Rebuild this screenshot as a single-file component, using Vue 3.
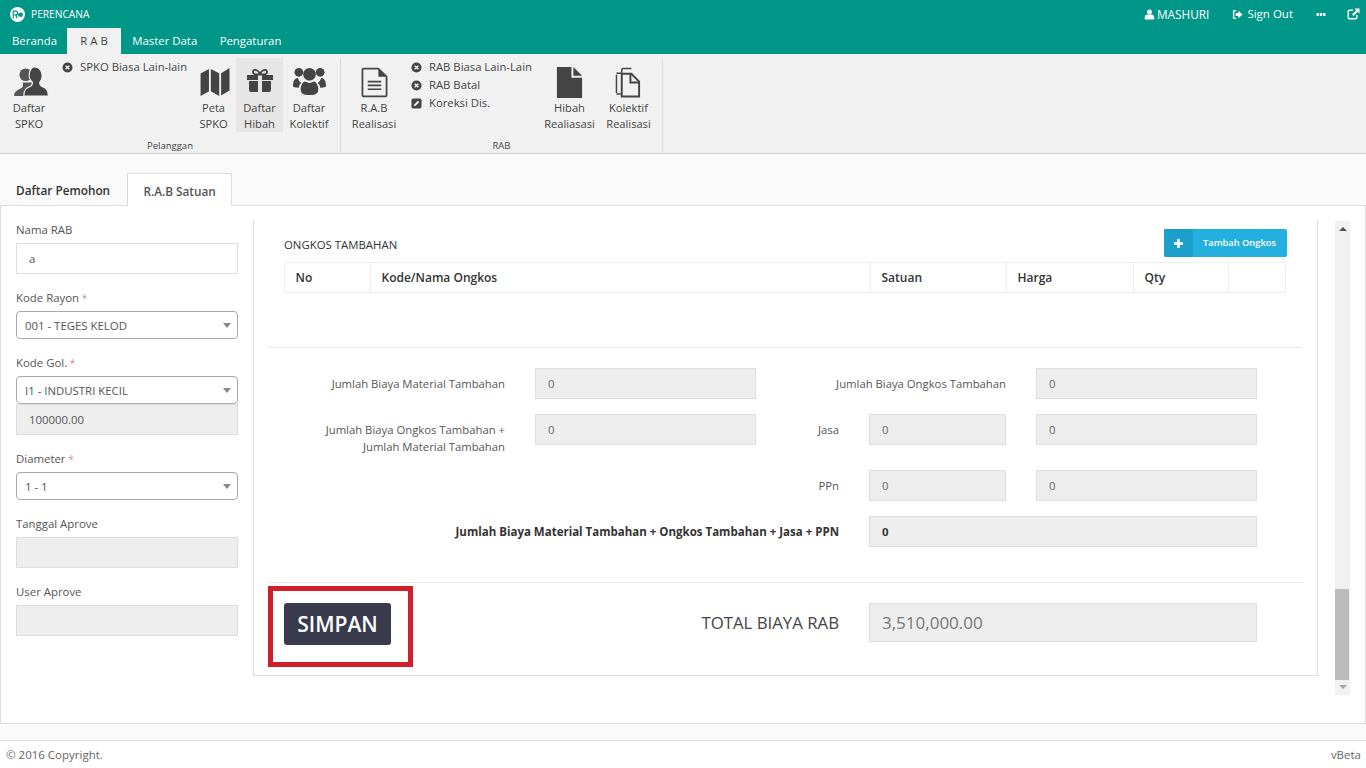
<template>
  <div class="app">
    <header class="topbar">
      <div class="brand">
        <svg class="logo" viewBox="0 0 16 16" aria-hidden="true">
          <circle cx="8" cy="8" r="8" fill="#fff" />
          <path d="M3.500 12V4.500h2.400a2 2 0 0 1 .3 4L7.500 12M4.700 8.400h1" fill="none" stroke="#009688" stroke-width="1.300" />
          <rect x="8.800" y="6" width="4.800" height="4.400" rx="1" fill="#009688" />
        </svg>
        <span>PERENCANA</span>
      </div>
      <div class="top-actions">
        <span class="top-link user">
          <svg viewBox="0 0 12 12" aria-hidden="true"><circle cx="6" cy="3.200" r="2.700" fill="#fff" /><path d="M.8 11.500V9.200C.8 7.400 2.200 6 3.600 6h4.800c1.400 0 2.800 1.400 2.800 3.200v2.300z" fill="#fff" /></svg>
          MASHURI
        </span>
        <span class="top-link signout">
          <svg viewBox="0 0 12 12" aria-hidden="true"><path d="M4.500 1H2.500A1.500 1.500 0 0 0 1 2.500v7A1.500 1.500 0 0 0 2.500 11h2V9.500h-2v-7h2z" fill="#fff" /><path d="M7 2l4.500 4L7 10V7.700H4V4.300h3z" fill="#fff" /></svg>
          Sign Out
        </span>
        <svg class="dots" viewBox="0 0 9 3" aria-hidden="true"><path d="M0 0h2.400v3H0zM3.300 0h2.400v3H3.300zM6.600 0H9v3H6.600z" fill="#fff" /></svg>
        <svg class="popout" viewBox="0 0 13 12" aria-hidden="true"><path d="M6 2.200H2.500a1.300 1.300 0 0 0-1.300 1.300v6a1.300 1.300 0 0 0 1.300 1.300h6a1.300 1.300 0 0 0 1.300-1.300V7" fill="none" stroke="#fff" stroke-width="1.400" /><path d="M7.500.5H12.500v5L10.700 3.800 6.500 8 5 6.500l4.200-4.200z" fill="#fff" /></svg>
      </div>
    </header>

    <nav class="menu">
      <a v-for="item in menu" :key="item" class="menu-item" :class="{ active: item === 'R A B' }">{{ item }}</a>
    </nav>

    <section class="ribbon">
      <div class="group group-one">
        <div class="group-items">
          <div class="rb rb-spko">
            <svg viewBox="0 0 36 32" aria-hidden="true">
              <circle cx="12" cy="9" r="6.500" fill="#555" />
              <path d="M0 31c0-5 4-6 7-8 3-1 2-4 2-6h10l5 14z" fill="#555" />
              <path d="M21 1c4.500 0 8 3.500 8 9 0 3-1 5.500-2.500 7 0 2 .5 3.500 3 4.500 3 1.200 6 2.500 6 9.500H10c0-7 3-8.300 6-9.500 2.500-1 3-2.500 3-4.500-1.500-1.500-3.500-4-3.500-7 0-5 2.500-9 5.500-9z" fill="#444" stroke="#f1f1f1" stroke-width="1.200" />
            </svg>
            <span>Daftar<br />SPKO</span>
          </div>
          <ul class="rb-list list-one">
            <li>
              <svg viewBox="0 0 12 12" aria-hidden="true"><circle cx="6" cy="6" r="5.500" fill="#444" /><path d="M4 4l4 4M8 4l-4 4" stroke="#f1f1f1" stroke-width="1.600" /></svg>
              SPKO Biasa Lain-lain
            </li>
          </ul>
          <div class="rb rb-peta">
            <svg viewBox="0 0 32 30" aria-hidden="true"><path d="M0 6l9-5v24l-9 5zM11 1l9 4.500V30l-9-5zM22 5.500L31 0v24l-9 5.500z" fill="#444" /></svg>
            <span>Peta<br />SPKO</span>
          </div>
          <div class="rb rb-hibah is-active">
            <svg viewBox="0 0 26 23" aria-hidden="true">
              <path d="M8 5.500C4.500 3.500 6 .2 9 1c2 .6 3.500 2.500 4 4.500 .5-2 2-3.900 4-4.500 3-.8 4.500 2.500 1 4.500z" fill="none" stroke="#444" stroke-width="1.800" />
              <path d="M0 6h11v5H0zM15 6h11v5H15zM2 12h9v11H4a2 2 0 0 1-2-2zM15 12h9v9a2 2 0 0 1-2 2h-7z" fill="#444" />
            </svg>
            <span>Daftar<br />Hibah</span>
          </div>
          <div class="rb rb-kolektif">
            <svg viewBox="0 0 34 30" aria-hidden="true">
              <circle cx="6" cy="6" r="4.500" fill="#444" /><circle cx="28" cy="6" r="4.500" fill="#444" /><circle cx="17" cy="8" r="6.500" fill="#444" />
              <path d="M0 20c0-5 2-8 5-8 1 3 2 4 3.500 5C7 18 6 20 6 22 2 22 0 21.500 0 20zM34 20c0-5-2-8-5-8-1 3-2 4-3.500 5 1.500 1 2.500 3 2.500 5 4 0 6-.5 6-2z" fill="#444" />
              <path d="M8 24c0-5 2-8 4.500-8.500 1.500 1 3 1.500 4.500 1.500s3-.5 4.500-1.500C24 16 26 19 26 24c0 4-3 5.500-9 5.500S8 28 8 24z" fill="#444" />
            </svg>
            <span>Daftar<br />Kolektif</span>
          </div>
        </div>
        <div class="group-label">Pelanggan</div>
      </div>

      <div class="group group-two">
        <div class="group-items">
          <div class="rb rb-rab">
            <svg viewBox="0 0 28 32" aria-hidden="true">
              <path d="M1.500 3A1.500 1.500 0 0 1 3 1.500h15l8.500 8.500v19a1.500 1.500 0 0 1-1.500 1.500H3A1.500 1.500 0 0 1 1.500 29z" fill="none" stroke="#444" stroke-width="1.800" />
              <path d="M18 2v8h8z" fill="#444" />
              <path d="M7 15h14M7 19h14M7 23h14" stroke="#444" stroke-width="1.800" />
            </svg>
            <span>R.A.B<br />Realisasi</span>
          </div>
          <ul class="rb-list list-two">
            <li>
              <svg viewBox="0 0 12 12" aria-hidden="true"><circle cx="6" cy="6" r="5.500" fill="#444" /><path d="M4 4l4 4M8 4l-4 4" stroke="#f1f1f1" stroke-width="1.600" /></svg>
              RAB Biasa Lain-Lain
            </li>
            <li>
              <svg viewBox="0 0 12 12" aria-hidden="true"><circle cx="6" cy="6" r="5.500" fill="#444" /><path d="M4 4l4 4M8 4l-4 4" stroke="#f1f1f1" stroke-width="1.600" /></svg>
              RAB Batal
            </li>
            <li>
              <svg viewBox="0 0 12 12" aria-hidden="true"><rect x=".5" y=".5" width="11" height="11" rx="2" fill="#444" /><path d="M3 9l.5-2L7.500 3l1.500 1.500-4 4z" fill="#f1f1f1" /></svg>
              Koreksi Dis.
            </li>
          </ul>
          <div class="rb rb-real">
            <svg viewBox="0 0 26 32" aria-hidden="true"><path d="M0 0h15v11h11v21H0zM17 0l9 9h-9z" fill="#444" /></svg>
            <span>Hibah<br />Realiasasi</span>
          </div>
          <div class="rb rb-real">
            <svg viewBox="0 0 28 32" aria-hidden="true">
              <path d="M7 6V3a1.500 1.500 0 0 1 1.500-1.500H17M1.500 8v19" fill="none" stroke="#444" stroke-width="1.500" />
              <path d="M7 7h10l8 8v15.500H7z" fill="none" stroke="#444" stroke-width="2" />
              <path d="M16 7v9h9" fill="none" stroke="#444" stroke-width="2" />
              <path d="M1.500 6.500H7M1.500 28H6" stroke="#444" stroke-width="1.500" />
            </svg>
            <span>Kolektif<br />Realisasi</span>
          </div>
        </div>
        <div class="group-label">RAB</div>
      </div>
    </section>

    <section class="page">
      <div class="tabs">
        <span class="tab">Daftar Pemohon</span>
        <span class="tab active">R.A.B Satuan</span>
      </div>

      <div class="tab-body">
        <aside class="side">
          <div v-for="f in fields" :key="f.label" class="field">
            <label>{{ f.label }}<em v-if="f.required"> *</em></label>
            <div v-if="f.type === 'select'" class="select">
              <span>{{ f.value }}</span><i class="caret"></i>
            </div>
            <div v-else class="input" :class="{ off: f.off }">{{ f.value }}</div>
            <div v-if="f.extra" class="input off">{{ f.extra }}</div>
          </div>
        </aside>

        <div class="panel">
          <div class="ongkos">
            <div class="ongkos-head">
              <h3>ONGKOS TAMBAHAN</h3>
              <button type="button" class="add-btn">
                <span class="add-icon">
                  <svg viewBox="0 0 9 9" aria-hidden="true"><path d="M3.200 0h2.600v3.200H9v2.600H5.800V9H3.200V5.800H0V3.200h3.200z" fill="#fff" /></svg>
                </span>
                <span class="add-text">Tambah Ongkos</span>
              </button>
            </div>
            <table class="grid-table">
              <thead>
                <tr>
                  <th class="c-no">No</th>
                  <th class="c-kode">Kode/Nama Ongkos</th>
                  <th class="c-satuan">Satuan</th>
                  <th class="c-harga">Harga</th>
                  <th class="c-qty">Qty</th>
                  <th></th>
                </tr>
              </thead>
            </table>
          </div>

          <div class="totals">
            <div class="lbl">Jumlah Biaya Material Tambahan</div>
            <div class="box">0</div>
            <div class="lbl span-2">Jumlah Biaya Ongkos Tambahan</div>
            <div class="box">0</div>

            <div class="lbl two-line">Jumlah Biaya Ongkos Tambahan +<br />Jumlah Material Tambahan</div>
            <div class="box">0</div>
            <div class="lbl">Jasa</div>
            <div class="box">0</div>
            <div class="box">0</div>

            <div class="lbl from-3">PPn</div>
            <div class="box">0</div>
            <div class="box">0</div>

            <div class="lbl strong span-3">Jumlah Biaya Material Tambahan + Ongkos Tambahan + Jasa + PPN</div>
            <div class="box strong span-2">0</div>
          </div>

          <div class="save-row">
            <div class="save-cell">
              <button type="button" class="save-btn">SIMPAN</button>
              <div class="highlight"></div>
            </div>
            <div class="total-lbl">TOTAL BIAYA RAB</div>
            <div class="total-box">3,510,000.00</div>
          </div>
        </div>

        <div class="scrollbar">
          <i class="arrow up"></i>
          <div class="track"><div class="thumb"></div></div>
          <i class="arrow down"></i>
        </div>
      </div>
    </section>

    <div class="strip"></div>
    <footer class="footer">
      <span>© 2016 Copyright.</span>
      <span>vBeta</span>
    </footer>
  </div>
</template>

<script setup>
const menu = ['Beranda', 'R A B', 'Master Data', 'Pengaturan']

const fields = [
  { label: 'Nama RAB', value: 'a' },
  { label: 'Kode Rayon', value: '001 - TEGES KELOD', type: 'select', required: true },
  { label: 'Kode Gol.', value: 'I1 - INDUSTRI KECIL', type: 'select', required: true, extra: '100000.00' },
  { label: 'Diameter', value: '1 - 1', type: 'select', required: true },
  { label: 'Tanggal Aprove', value: '', off: true },
  { label: 'User Aprove', value: '', off: true },
]
</script>

<style>
html, body {
  margin: 0;
  overflow: hidden;
}
</style>

<style scoped>
* {
  box-sizing: border-box;
}

.app {
  display: flex;
  flex-direction: column;
  height: 768px;
  background: #fff;
  color: #444;
  font-family: "Open Sans", "Noto Sans", sans-serif;
  font-size: 11.400px;
  line-height: 16px;
}

.topbar {
  display: flex;
  flex: 0 0 28px;
  align-items: center;
  justify-content: space-between;
  background: #009688;
  color: #fff;
  padding: 0 6px 0 10px;
}

.brand {
  display: flex;
  align-items: center;
  gap: 6px;
  font-size: 10.200px;
}

.logo {
  width: 15px;
  height: 15px;
}

.top-actions {
  display: flex;
  align-items: center;
  color: #fff;
}

.top-link {
  display: flex;
  align-items: center;
  font-size: 11.500px;
}

.top-link svg {
  width: 11px;
  height: 11px;
}

.user {
  gap: 2px;
  margin-right: 23px;
  font-size: 11.800px;
}

.signout {
  gap: 4px;
  margin-right: 23px;
}

.dots {
  width: 10px;
  height: 3px;
  margin-right: 21px;
}

.popout {
  width: 13px;
  height: 12px;
}

.menu {
  display: flex;
  flex: 0 0 26px;
  background: #009688;
}

.menu-item {
  padding: 5px 11.200px;
  color: #fff;
  font-size: 11.400px;
}

.menu-item:first-child {
  width: 67px;
  padding: 5px 0 5px 12px;
}

.menu-item.active {
  width: 54px;
  padding: 5px 0;
  background: #f1f1f1;
  color: #444;
  text-align: center;
}

.ribbon {
  display: flex;
  flex: 0 0 100px;
  border-bottom: 1px solid #d0d0d0;
  background: #f1f1f1;
  padding-top: 4px;
}

.group {
  display: flex;
  flex-direction: column;
  height: 94px;
  border-right: 1px solid #d9d9d9;
}

.group-one {
  width: 341px;
}

.group-two {
  width: 322px;
}

.group-items {
  display: flex;
  flex: 0 0 81px;
}

.group-label {
  color: #444;
  font-size: 9.500px;
  line-height: 14px;
  text-align: center;
}

.rb {
  display: flex;
  flex-direction: column;
  align-items: center;
  height: 74px;
  padding-top: 10px;
  color: #444;
  font-size: 11.100px;
  line-height: 16px;
  text-align: center;
  white-space: nowrap;
}

.rb svg {
  display: block;
  height: 30px;
  margin-bottom: 2px;
}

.rb.is-active {
  background: #e6e6e6;
}

.rb-spko {
  width: 48px;
  margin-left: 5px;
}

.rb-spko svg {
  width: 35px;
  height: 31px;
  margin: -2px 0 3px 4px;
}

.rb-peta {
  width: 45px;
}

.rb-peta svg {
  width: 31px;
  height: 28px;
  margin: 0 0 4px 3px;
}

.rb-hibah {
  width: 47px;
}

.rb-hibah svg {
  width: 26px;
  height: 23px;
  margin: 1px 0 8px;
}

.rb-kolektif {
  width: 52px;
}

.rb-kolektif svg {
  width: 33px;
  margin: -2px 0 4px;
}

.rb-rab {
  width: 52px;
  margin-left: 7px;
}

.rb-rab svg,
.rb-real svg {
  width: 27px;
  height: 31px;
  margin: -1px 0 2px;
}

.rb-real {
  width: 59px;
}

.rb-list {
  list-style: none;
  margin: 0;
  padding: 0;
  font-size: 11.300px;
  line-height: 18px;
  white-space: nowrap;
}

.rb-list li {
  display: flex;
  align-items: center;
  gap: 7px;
}

.rb-list svg {
  width: 11px;
  height: 11px;
}

.list-one {
  width: 129px;
  margin-left: 9px;
}

.list-two {
  width: 129px;
  margin-left: 11px;
}

.page {
  display: flex;
  flex: 1;
  flex-direction: column;
  min-height: 0;
  background: #fafafa;
  padding-top: 19px;
}

.tabs {
  display: flex;
  flex: 0 0 32px;
  align-items: flex-start;
  height: 32px;
  padding-left: 16px;
}

.tab {
  padding: 9px 0;
  margin-right: 17px;
  color: #333;
  font-size: 11.800px;
  font-weight: 600;
}

.tab.active {
  position: relative;
  z-index: 1;
  width: 105px;
  height: 33px;
  border: 1px solid #ddd;
  border-bottom: 0;
  background: #fff;
  color: #555;
  text-align: center;
}

.tab-body {
  display: flex;
  flex: 1;
  min-height: 0;
  border: 1px solid #ddd;
  background: #fff;
  padding: 14px 0 0 15px;
}

.side {
  flex: 0 0 222px;
  margin-right: 15px;
}

.field {
  margin-bottom: 14px;
}

.field label {
  display: block;
  height: 18px;
  margin-bottom: 5px;
  color: #555;
  line-height: 20px;
}

.field em {
  color: #e08a88;
  font-size: 10px;
  font-style: normal;
}

.input {
  height: 31px;
  border: 1px solid #ddd;
  background: #fff;
  color: #555;
  padding: 0 12px;
  line-height: 29px;
}

.input.off {
  border-color: #ddd;
  background: #eee;
}

.select {
  display: flex;
  align-items: center;
  justify-content: space-between;
  height: 28px;
  border: 1px solid #aaa;
  border-radius: 4px;
  background: #fff;
  color: #555;
  padding: 0 6px 0 8px;
}

.select span {
  padding-top: 2px;
}

.caret {
  width: 0;
  height: 0;
  border-top: 5px solid #888;
  border-right: 4px solid transparent;
  border-left: 4px solid transparent;
}

.panel {
  flex: 0 0 1065px;
  height: 456px;
  border: 1px solid #ddd;
  border-top: 0;
  padding: 4px 14px 0;
}

.ongkos {
  height: 124px;
  border-bottom: 1px solid #e8e8e8;
  padding: 0 16px;
  margin-right: 1px;
}

.ongkos-head {
  display: flex;
  align-items: flex-end;
  justify-content: space-between;
  height: 33px;
}

.ongkos-head h3 {
  margin: 0;
  color: #333;
  font-size: 11.400px;
  font-weight: 400;
  line-height: 16px;
  padding-bottom: 4px;
}

.add-btn {
  display: flex;
  width: 123px;
  height: 28px;
  overflow: hidden;
  border: 0;
  border-radius: 2px;
  background: #23b0de;
  color: #fff;
  padding: 0;
  font: inherit;
  margin-right: -1px;
}

.add-icon {
  display: flex;
  flex: 0 0 29px;
  align-items: center;
  justify-content: center;
  background: #1c9fcb;
}

.add-icon svg {
  width: 9px;
  height: 9px;
}

.add-text {
  flex: 1;
  font-size: 9.300px;
  font-weight: 600;
  line-height: 27px;
  padding-left: 10px;
  text-align: left;
  white-space: nowrap;
}

.grid-table {
  width: 1002px;
  margin-top: 5px;
  border-collapse: collapse;
  table-layout: fixed;
}

.grid-table th {
  height: 30px;
  border: 1px solid #eee;
  color: #333;
  padding: 0 10.500px;
  font-size: 12px;
  font-weight: 600;
  text-align: left;
}

.c-no { width: 86px; }
.c-kode { width: 500px; }
.c-satuan { width: 136px; }
.c-harga { width: 127px; }
.c-qty { width: 95px; }

.totals {
  display: grid;
  grid-template-columns: 237px 221px 53px 137px 221px;
  column-gap: 30px;
  row-gap: 15px;
  align-items: start;
  align-content: start;
  height: 235px;
  border-bottom: 1px solid #e8e8e8;
  padding-top: 20px;
}

.lbl {
  color: #555;
  font-size: 11.300px;
  line-height: 17px;
  padding-top: 7px;
  text-align: right;
  white-space: nowrap;
}

.box {
  height: 31px;
  border: 1px solid #ddd;
  background: #eee;
  color: #666;
  padding: 0 12px;
  line-height: 29px;
}

.two-line {
  min-height: 41px;
}

.from-3 {
  grid-column: 3;
}

.span-2 {
  grid-column: span 2;
}

.span-3 {
  grid-column: span 3;
}

.lbl.strong {
  color: #333;
  font-size: 11.500px;
  font-weight: 700;
}

.box.strong {
  color: #333;
  font-weight: 700;
}

.save-row {
  display: grid;
  grid-template-columns: 123px 448px 388px;
  column-gap: 0;
  align-items: start;
  padding-top: 20px;
}

.save-cell {
  position: relative;
  padding-left: 16px;
}

.save-btn {
  display: block;
  width: 107px;
  height: 42px;
  border: 0;
  border-radius: 3px;
  background: #373b4d;
  color: #fff;
  padding: 0;
  font: 600 21px/42px "Open Sans", sans-serif;
}

.highlight {
  position: absolute;
  top: -17px;
  left: 0;
  width: 145px;
  height: 81px;
  border: 5px solid #cf1f2b;
}

.total-lbl {
  color: #444;
  font-size: 16.800px;
  line-height: 40px;
  text-align: right;
}

.total-box {
  height: 39px;
  margin-left: 30px;
  width: 388px;
  border: 1px solid #ddd;
  background: #eee;
  color: #777;
  font-size: 17px;
  line-height: 37px;
  padding: 0 12px;
}

.scrollbar {
  display: flex;
  flex: 0 0 15px;
  flex-direction: column;
  align-items: center;
  width: 15px;
  height: 474px;
  margin-left: 17px;
  margin-top: 1px;
  background: #f1f1f1;
}

.arrow {
  flex: 0 0 auto;
  width: 0;
  height: 0;
  border-right: 4px solid transparent;
  border-left: 4px solid transparent;
}

.arrow.up {
  margin-top: 6px;
  border-bottom: 4px solid #505050;
}

.arrow.down {
  margin-bottom: 6px;
  border-top: 4px solid #a3a3a3;
}

.track {
  display: flex;
  flex: 1;
  flex-direction: column;
  justify-content: flex-end;
  width: 100%;
  padding: 0 1px 5px 0;
}

.thumb {
  height: 91px;
  background: #bcbcbc;
}

.strip {
  flex: 0 0 16px;
  background: #fafafa;
}

.footer {
  display: flex;
  flex: 0 0 28px;
  align-items: center;
  justify-content: space-between;
  border-top: 1px solid #e2e2e2;
  background: #fff;
  color: #666;
  font-size: 11.500px;
  padding: 0 5px 0 6px;
}
</style>
